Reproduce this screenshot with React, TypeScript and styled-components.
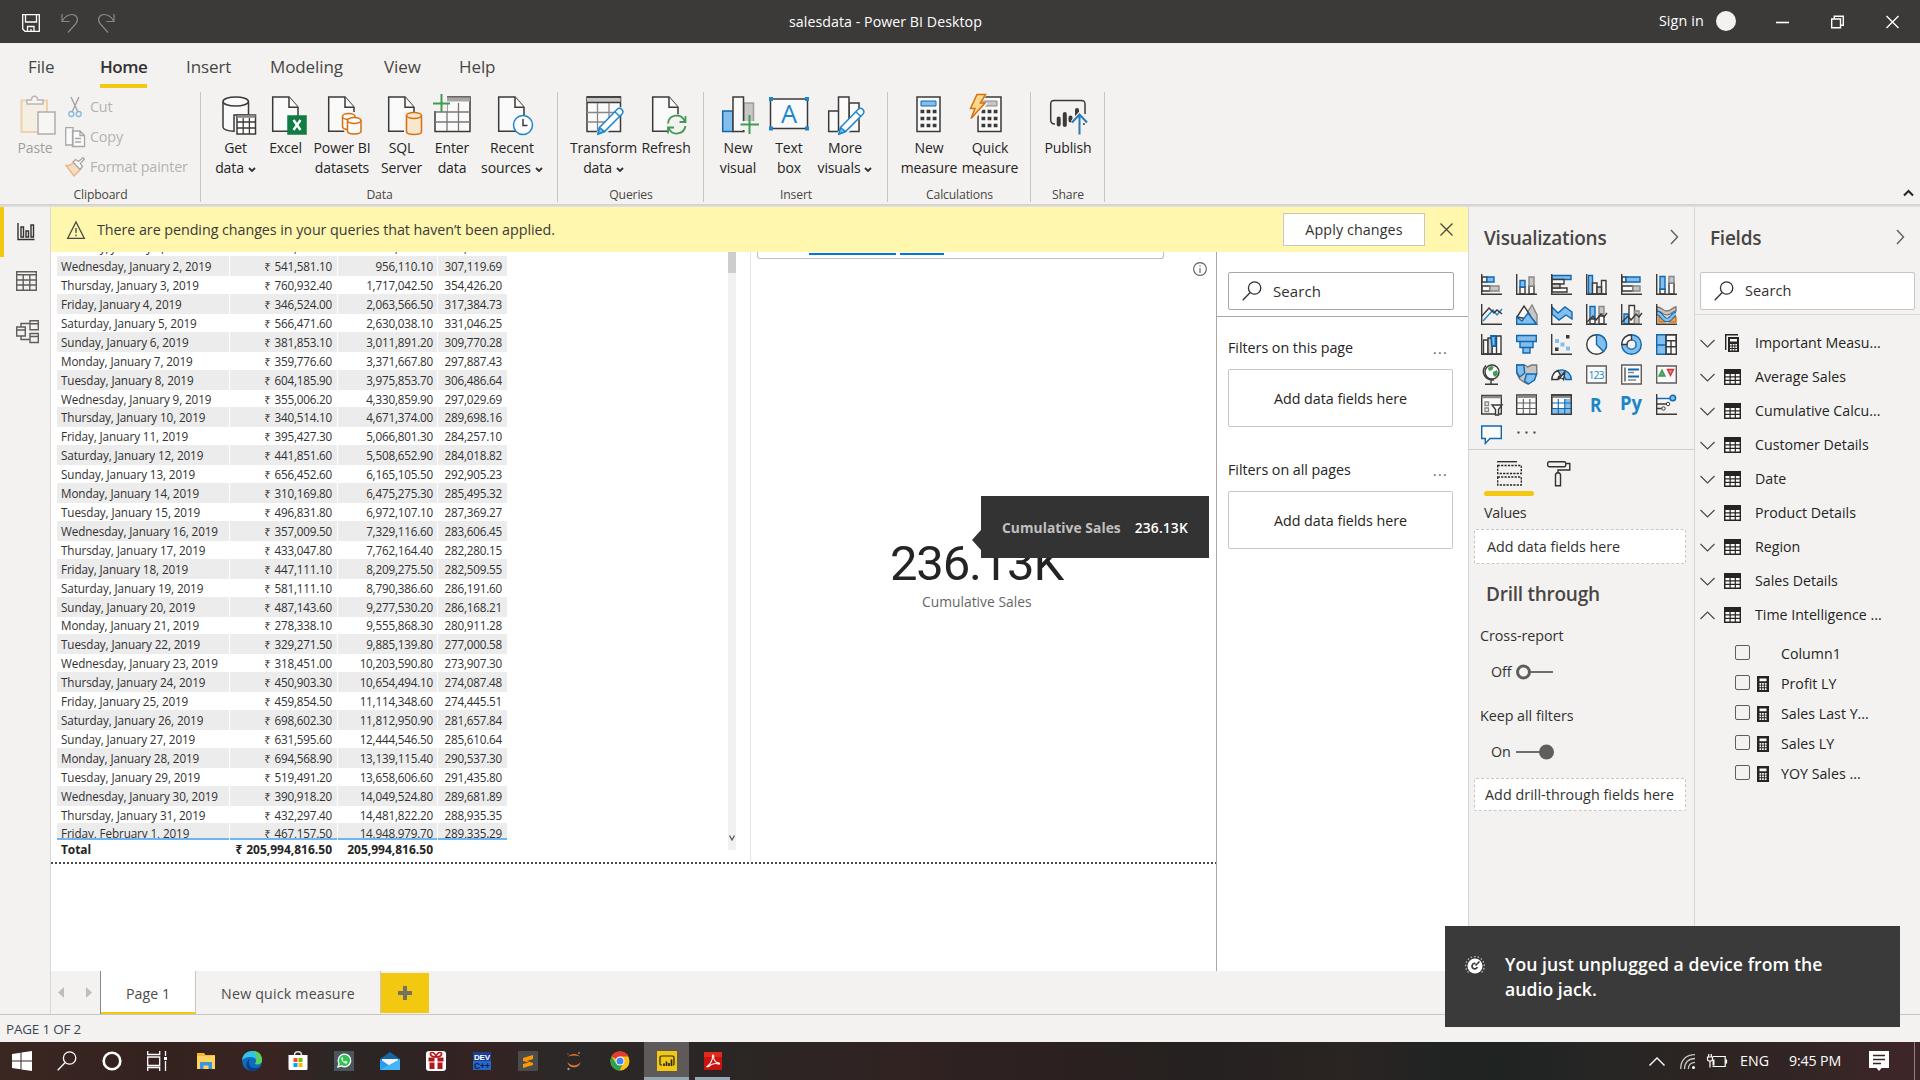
import React from "react";
import styled, { createGlobalStyle, css } from "styled-components";

const GlobalStyle = createGlobalStyle`
  * { box-sizing: border-box; }
  html, body { margin: 0; padding: 0; background: #f3f2f1; overflow: hidden; }
  body { font-family: "Open Sans", "Noto Sans", sans-serif; color: #252423; }
  svg { display: block; flex: none; overflow: visible; }
`;

const ink = "#3b3a39";
const blue = "#1068b0";
const sky = "#83beec";
const grey = "#c8c6c4";
const paper = "#fafafa";
const gold = "#f2c811";

/* ---------- shared ---------- */
const Label = styled.span<{ $size?: number; $ls?: number; $weight?: number; $color?: string }>`
  font-size: ${(p) => p.$size ?? 14.3}px;
  letter-spacing: ${(p) => p.$ls ?? -0.03}px;
  font-weight: ${(p) => p.$weight ?? 400};
  color: ${(p) => p.$color ?? "inherit"};
  white-space: pre;
  line-height: 20px;
`;

const Screen = styled.div`
  width: 1920px;
  height: 1080px;
  display: flex;
  flex-direction: column;
  background: #f3f2f1;
  position: relative;
`;

/* ---------- title bar ---------- */
const TitleBar = styled.header`
  height: 43px;
  flex: none;
  display: grid;
  grid-template-columns: 1fr auto 1fr;
  align-items: center;
  background: #3b3a38;
  color: #fff;
  padding: 0 21px 1px 22px;
`;
const QuickAccess = styled.div`
  display: flex;
  align-items: center;
  gap: 20px;
  padding-top: 4px;
`;
const TitleText = styled.div`
  transform: translateX(-75px);
`;
const WindowControls = styled.div`
  display: flex;
  justify-content: flex-end;
  align-items: center;
`;
const Avatar = styled.span`
  width: 20px;
  height: 20px;
  border-radius: 50%;
  background: #f3f2f1;
  margin: 0 40px 0 12px;
`;

/* ---------- ribbon ---------- */
const TabBar = styled.nav`
  height: 49px;
  flex: none;
  display: flex;
  padding-left: 28px;
`;
const RibbonTab = styled.div<{ $w: number; $active?: boolean }>`
  width: ${(p) => p.$w}px;
  height: 45px;
  padding-top: 13px;
  white-space: nowrap;
  color: #484644;
  span { line-height: 22px; font-size: 17px; letter-spacing: -0.1px; }
  ${(p) =>
    p.$active &&
    css`
      color: #323130;
      span {
        display: inline-block;
        height: 32px;
        font-weight: 600;
        border-bottom: 4px solid ${gold};
        letter-spacing: -0.45px;
      }
    `}
`;
const Ribbon = styled.section`
  height: 112px;
  flex: none;
  display: flex;
  align-items: flex-start;
`;
const RibbonGroup = styled.div<{ $w: number }>`
  width: ${(p) => p.$w}px;
  height: 112px;
  background: linear-gradient(#c8c6c4, #c8c6c4) right top / 1px 110px no-repeat;
  display: flex;
  flex-direction: column;
`;
const GroupBody = styled.div<{ $pad: number }>`
  height: 93px;
  flex: none;
  padding: 2px 0 0 ${(p) => p.$pad}px;
  display: flex;
`;
const GroupName = styled.div`
  text-align: center;
  font-size: 12.2px;
  line-height: 19px;
  letter-spacing: -0.15px;
  color: #484644;
`;
const Btn = styled.div<{ $w: number; $muted?: boolean }>`
  width: ${(p) => p.$w}px;
  flex: none;
  display: flex;
  flex-direction: column;
  align-items: center;
  font-size: 14px;
  letter-spacing: -0.12px;
  line-height: 20px;
  white-space: nowrap;
  color: ${(p) => (p.$muted ? "#a19f9d" : "#252423")};
`;
const BtnLine = styled.div`
  display: flex;
  align-items: center;
  gap: 4px;
  justify-content: center;
`;
const ClipActions = styled.div`
  display: flex;
  flex-direction: column;
  margin: -2px 0 0 4px;
`;
const ClipAction = styled.div`
  height: 30px;
  display: flex;
  align-items: center;
  gap: 5px;
  color: #b5b3b1;
  font-size: 14.4px;
  letter-spacing: -0.2px;
  white-space: nowrap;
  line-height: 20px;
`;
const Collapse = styled.div`
  margin: 97px 6px 0 auto;
`;
const RibbonShadow = styled.div`
  height: 3px;
  flex: none;
  background: linear-gradient(#d0cfcd, #e4e3e2);
`;

/* ---------- body ---------- */
const Body = styled.main`
  height: 808px;
  flex: none;
  display: grid;
  grid-template-columns: 51px 1417px 226px 226px;
  border-bottom: 1px solid #c8c6c4;
`;
const Rail = styled.aside`
  border-right: 1px solid #dad8d6;
  display: flex;
  flex-direction: column;
`;
const RailItem = styled.div<{ $active?: boolean }>`
  height: 50px;
  display: flex;
  align-items: center;
  padding-left: ${(p) => (p.$active ? 12 : 16)}px;
  padding-bottom: ${(p) => (p.$active ? 0 : 2)}px;
  border-left: ${(p) => (p.$active ? `4px solid ${gold}` : "0")};
`;
const Work = styled.section`
  display: flex;
  flex-direction: column;
  min-width: 0;
`;
const Banner = styled.div`
  height: 45px;
  flex: none;
  background: #fff7ad;
  display: flex;
  align-items: center;
  padding: 0 15px 0 16px;
  color: #3b3a39;
`;
const BannerText = styled(Label)`
  margin-left: 12px;
`;
const ApplyButton = styled.button`
  margin: 0 15px 0 auto;
  width: 142px;
  height: 33px;
  background: #fff;
  border: 1px solid #c8c6c4;
  padding: 0;
  color: #323130;
  font: 500 14.3px/20px "Open Sans", sans-serif;
  letter-spacing: 0.1px;
`;
const CanvasRow = styled.div`
  height: 719px;
  display: grid;
  grid-template-columns: 1165px 252px;
  background: #fff;
`;
const ReportPage = styled.div`
  height: 612px;
  display: flex;
  overflow: hidden;
  position: relative;
`;
const DottedEdge = styled.div`
  height: 2px;
  margin-top: -2px;
  position: relative;
  background: repeating-linear-gradient(90deg, #4a4a4a 0 2px, #fff 2px 4px);
`;
const TableVisual = styled.div`
  width: 699px;
  padding-left: 6px;
  display: flex;
  justify-content: space-between;
`;
const TableBody = styled.div`
  height: 586px;
  width: 450px;
  overflow: hidden;
`;
const TableRows = styled.div`
  margin-top: -14.7px;
`;
const Row = styled.div<{ $shade?: boolean; $total?: boolean }>`
  display: grid;
  grid-template-columns: 172px 107px 99px 69px;
  column-gap: 1px;
  height: ${(p) => (p.$total ? 22 : 18.92)}px;
  line-height: ${(p) => (p.$total ? 20 : 20)}px;
  font-size: 11.7px;
  letter-spacing: -0.2px;
  color: #323130;
  white-space: nowrap;
  span { padding: 0 5px; text-align: right; background: ${(p) => (p.$shade ? "#ececec" : "transparent")}; }
  span:first-child { padding-left: 4px; text-align: left; letter-spacing: -0.1px; }
  span:nth-child(2) { word-spacing: 0.8px; }
  span:nth-child(3) { padding-right: 4px; }
  ${(p) =>
    p.$total &&
    css`
      font-weight: 700;
      font-size: 12px;
      color: #252423;
      letter-spacing: 0;
      span { border-top: 2px solid #6db5f3; }
    `}
`;
const ScrollTrack = styled.div`
  width: 8px;
  height: 598px;
  margin-right: 14px;
  background: #f1f1f1;
  display: flex;
  flex-direction: column;
  justify-content: space-between;
  align-items: center;
  padding-bottom: 9px;
`;
const ScrollThumb = styled.div`
  width: 8px;
  height: 21px;
  background: #cdcdcd;
`;
const CardVisual = styled.div`
  width: 466px;
  border-left: 1px solid #e6e6e6;
  display: flex;
  flex-direction: column;
`;
const Slicer = styled.div`
  width: 407px;
  height: 7px;
  margin-left: 6px;
  border: 1px solid #c0bebc;
  border-top: 0;
  border-radius: 0 0 3px 3px;
  display: flex;
  gap: 4px;
  padding: 1px 0 0 51px;
`;
const SlicerBar = styled.div<{ $w: number }>`
  width: ${(p) => p.$w}px;
  height: 2px;
  background: #0078d4;
`;
const InfoRow = styled.div`
  display: flex;
  justify-content: flex-end;
  padding: 3px 9px 0 0;
`;
const CardValue = styled.div`
  margin: 258px 0 0 139px;
  font-family: Roboto, sans-serif;
  font-size: 49px;
  line-height: 60px;
  letter-spacing: -1.2px;
  color: #252423;
`;
const CardLabel = styled.div`
  margin: -4px 0 0 171px;
  color: #666;
`;
const Tooltip = styled.div`
  position: absolute;
  left: 930px;
  top: 244px;
  width: 228px;
  height: 62px;
  background: #333;
  display: flex;
  align-items: center;
  padding: 1px 0 0 21px;
  gap: 14px;
  &::before {
    content: "";
    position: absolute;
    left: -9px;
    top: 34px;
    border: solid transparent;
    border-width: 10px 9px 10px 0;
    border-right-color: #333;
  }
`;
const FilterPane = styled.div`
  border-left: 1px solid #a9a6a3;
  padding-top: 20px;
`;
const SearchBox = styled.div<{ $w: number; $ml: number; $line: string }>`
  width: ${(p) => p.$w}px;
  height: 38px;
  margin-left: ${(p) => p.$ml}px;
  background: #fff;
  border: 1px solid ${(p) => p.$line};
  border-radius: 2px;
  display: flex;
  align-items: center;
  gap: 11px;
  padding-left: 13px;
  color: #323130;
`;
const Rule = styled.div<{ $mt: number; $color: string }>`
  height: 1px;
  margin-top: ${(p) => p.$mt}px;
  background: ${(p) => p.$color};
`;
const FilterHead = styled.div<{ $mt: number }>`
  margin-top: ${(p) => p.$mt}px;
  height: 20px;
  padding: 0 20px 0 11px;
  display: flex;
  justify-content: space-between;
`;
const Dots = styled.span`
  font-size: 14px;
  line-height: 21px;
  letter-spacing: 1.3px;
  color: #605e5c;
`;
const FilterDrop = styled.div`
  margin: 11px 0 0 11px;
  width: 225px;
  height: 58px;
  padding-top: 1px;
  border: 1px solid #c8c6c4;
  border-radius: 2px;
  display: flex;
  align-items: center;
  justify-content: center;
`;

/* ---------- page tabs ---------- */
const PageTabs = styled.div`
  height: 43px;
  display: flex;
  background: #f3f2f1;
  color: #4d4b49;
`;
const Arrows = styled.div`
  width: 50px;
  border-right: 1px solid #8a8886;
  display: flex;
  align-items: center;
  padding-left: 7px;
  gap: 22px;
`;
const PageTab = styled.div<{ $w: number; $active?: boolean }>`
  width: ${(p) => p.$w}px;
  border-right: 1px solid #c8c6c4;
  border-bottom: 2px solid ${(p) => (p.$active ? gold : "transparent")};
  background: ${(p) => (p.$active ? "#fff" : "transparent")};
  display: flex;
  align-items: center;
  justify-content: center;
  padding-top: 4px;
`;
const AddPage = styled.div`
  width: 48px;
  height: 40px;
  margin-top: 2px;
  background: ${gold};
  display: flex;
  align-items: center;
  justify-content: center;
`;

/* ---------- right panes ---------- */
const Pane = styled.aside`
  border-left: 1px solid #d8d6d4;
  display: flex;
  flex-direction: column;
  color: #323130;
`;
const PaneHead = styled.div<{ $h: number; $pr: number }>`
  height: ${(p) => p.$h}px;
  flex: none;
  display: flex;
  justify-content: space-between;
  align-items: flex-start;
  padding: 20px ${(p) => p.$pr}px 0 15px;
  svg { margin-top: 2px; }
`;
const PaneTitle = styled.div`
  font-size: 19px;
  font-weight: 600;
  letter-spacing: -0.25px;
  line-height: 22px;
  color: #484644;
  white-space: nowrap;
`;
const VizGrid = styled.div`
  height: 182px;
  flex: none;
  display: grid;
  grid-template-columns: repeat(6, 35px);
  grid-auto-rows: 30px;
  padding-left: 12px;
`;
const WellTabs = styled.div`
  height: 46px;
  flex: none;
  display: flex;
  padding: 11px 0 0 15px;
`;
const WellTab = styled.div<{ $active?: boolean }>`
  width: 50px;
  height: 35px;
  display: flex;
  flex-direction: column;
  justify-content: space-between;
  align-items: center;
  &::after {
    content: "";
    width: 50px;
    height: 5px;
    border-radius: 3px;
    background: ${(p) => (p.$active ? gold : "transparent")};
  }
`;
const Line = styled.div<{ $mt: number; $ml: number; $h?: number }>`
  margin: ${(p) => p.$mt}px 0 0 ${(p) => p.$ml}px;
  height: ${(p) => p.$h ?? 20}px;
  flex: none;
  display: flex;
  align-items: center;
`;
const Well = styled.div<{ $h: number; $mt: number; $pl: number }>`
  width: 212px;
  height: ${(p) => p.$h}px;
  flex: none;
  margin: ${(p) => p.$mt}px 0 0 5px;
  padding-left: ${(p) => p.$pl}px;
  background: #fff;
  border: 1px dashed #c8c6c4;
  border-radius: 2px;
  display: flex;
  align-items: center;
`;
const FieldList = styled.div`
  padding-top: 11px;
`;
const ChildList = styled.div`
  padding-top: 6px;
`;
const FieldTable = styled.div`
  height: 34px;
  display: flex;
  align-items: center;
  padding-left: 5px;
  color: #252423;
`;
const FieldIcon = styled.div<{ $w: number; $ml: number; $mr: number }>`
  width: ${(p) => p.$w}px;
  margin: 0 ${(p) => p.$mr}px 0 ${(p) => p.$ml}px;
`;
const FieldRow = styled.div`
  height: 30px;
  display: flex;
  align-items: center;
  padding: 1px 0 0 40px;
  color: #252423;
`;
const Check = styled.span`
  width: 15px;
  height: 15px;
  border: 1px solid #605e5c;
  border-radius: 2px;
  margin-top: -3px;
`;

/* ---------- status, toast and taskbar ---------- */
const Status = styled.footer`
  height: 27px;
  flex: none;
  display: flex;
  align-items: center;
  padding-left: 6px;
  color: #3b4450;
`;
const Toast = styled.div`
  position: absolute;
  left: 1445px;
  top: 926px;
  width: 455px;
  height: 101px;
  background: #3a3a3a;
  color: #fff;
  display: flex;
  gap: 20px;
  padding: 26px 0 0 20px;
  svg { margin-top: 3px; }
`;
const ToastText = styled.div`
  font-size: 17.6px;
  font-weight: 600;
  line-height: 25px;
  letter-spacing: 0.05px;
  white-space: pre;
`;
const Taskbar = styled.div`
  height: 38px;
  flex: none;
  display: flex;
  color: #fff;
  background: linear-gradient(90deg, #3b2722 0, #33221f 150px, #3a2421 270px, #2c2624 330px, #2e2423 420px, #352322 480px, #2b2827 560px, #2b2625 720px, #302322 900px, #2c2020 1050px, #252120 1200px, #2a2422 1350px, #222323 1430px, #1f2322 1500px, #262625 1600px, #2d2422 1700px, #302524 1780px, #3e2628 1900px);
`;
const Task = styled.div<{ $w: number; $active?: boolean; $open?: boolean }>`
  width: ${(p) => p.$w}px;
  height: 38px;
  display: flex;
  align-items: center;
  justify-content: center;
  flex: none;
  background: ${(p) => (p.$active ? "#5d5a59" : "transparent")};
  border-bottom: ${(p) => (p.$active || p.$open ? "3px solid #93a7b5" : "0")};
  padding-top: ${(p) => (p.$active || p.$open ? 3 : 0)}px;
`;
const Tray = styled.div`
  margin-left: auto;
  display: flex;
  align-items: center;
  padding-right: 5px;
`;
const TrayItem = styled.div<{ $mr: number }>`
  margin-right: ${(p) => p.$mr}px;
  display: flex;
  align-items: center;
`;
const ShowDesktop = styled.div`
  width: 1px;
  height: 38px;
  background: #8a8382;
`;

/* ---------- ribbon icons ---------- */
const Big = ({ children }: { children: React.ReactNode }) => (
  <svg width="44" height="44" viewBox="0 0 44 44" fill="none" stroke={ink} strokeWidth="1.5">
    {children}
  </svg>
);
const Doc = () => (
  <>
    <path d="M8.7 3H25L34 13.2V37.3H8.7Z" fill={paper} />
    <path d="M25 3V13.2H34" fill={paper} />
  </>
);
const Cylinder = ({ x, y, w, h, fill = "#fafafa" }: { x: number; y: number; w: number; h: number; fill?: string }) => (
  <g stroke="#d9700f" fill={fill}>
    <path d={`M${x} ${y + 3}v${h - 6}c0 4 ${w} 4 ${w} 0v-${h - 6}`} />
    <ellipse cx={x + w / 2} cy={y + 3} rx={w / 2} ry="3" />
  </g>
);
const Pencil = () => (
  <g>
    <path d="M40.500 14.500L19 37.500L16 40L23 38Z" stroke="#f3f2f1" strokeWidth="5" />
    <path d="M17.500 33.500L35 15.500C38 12.500 43 16.500 40 20L22.500 37.500L16 40Z" fill="#fff" stroke="#1a86d0" />
    <path d="M17.500 33.500L22.500 37.500L16 40Z" fill={sky} stroke="#1a86d0" />
    <path d="M33 18l5 4.500" stroke="#1a86d0" />
  </g>
);
const bigIcons: Record<string, React.ReactNode> = {
  paste: (
    <g opacity="0.55">
      <path d="M8.500 6.500H34V38H8.500Z" fill="#f8eed9" stroke="#eab676" strokeWidth="2" />
      <path d="M14 10V6h4.500c0-5 6-5 6 0H30v4Z" fill={paper} stroke="#8a8886" />
      <path d="M25 18H42V40H25Z" fill={paper} stroke="#7a7876" />
    </g>
  ),
  get: (
    <>
      <path d="M9 7.500V33c0 2 4 4.300 11 4.300V21H34.500V7.500" fill={paper} />
      <ellipse cx="21.700" cy="7.500" rx="12.700" ry="4.600" fill={paper} />
      <path d="M23 21H41.500V40H23Z" fill="#fff" />
      <path d="M23 22.300H41.500" strokeWidth="3" stroke="#8a8886" />
      <path d="M23 28h18.500M23 34h18.500M29.200 24v16M35.400 24v16" strokeWidth="1.300" />
    </>
  ),
  excel: (
    <>
      <Doc />
      <path d="M24 22H42V40H24Z" fill="#107c41" stroke="#107c41" />
      <path d="M29.500 26l7 10M36.500 26l-7 10" stroke="#fff" strokeWidth="2.400" />
    </>
  ),
  pbi: (
    <>
      <Doc />
      <path d="M21 18H44V42H25Z" fill="#f3f2f1" stroke="none" />
      <Cylinder x={22.500} y={19.500} w={12.500} h={16} />
      <Cylinder x={27.500} y={23.500} w={13.500} h={16.500} />
    </>
  ),
  sql: (
    <>
      <Doc />
      <path d="M24 18H44V42H24Z" fill="#f3f2f1" stroke="none" />
      <Cylinder x={26.500} y={18.500} w={15} h={22} fill="#f9e6cf" />
    </>
  ),
  enter: (
    <>
      <path d="M5 3H40V37.500H5Z" fill={paper} />
      <path d="M5 5.500H40" stroke="#a8a6a4" strokeWidth="4" />
      <path d="M5 18H40M5 28H40M17 9V37M28.500 9V37" stroke="#7a7876" strokeWidth="1.300" />
      <path d="M1 0H17V17H1Z" fill="#f3f2f1" stroke="none" />
      <path d="M3 9.500H20M11.500 0V18" stroke="#3f9b55" strokeWidth="2" />
    </>
  ),
  recent: (
    <>
      <Doc />
      <circle cx="33" cy="31" r="9.500" fill="#fff" stroke="#1a86d0" />
      <path d="M33 25v6.500h4.500" />
    </>
  ),
  transform: (
    <>
      <path d="M5 3H38.500V37.500H5Z" fill={paper} />
      <path d="M5 6H38.500" stroke={grey} strokeWidth="4" />
      <path d="M5 8.500H38.500M5 3H38.500" />
      <path d="M5 18.500H38M5 28H30M15.500 9V37M27 9V30" stroke="#8a8886" strokeWidth="1.300" />
      <Pencil />
    </>
  ),
  refresh: (
    <>
      <Doc />
      <circle cx="32.500" cy="30.500" r="10.500" fill="#f3f2f1" stroke="none" />
      <path d="M24 29.500c1-9.500 13.500-10.500 16.500-2.500M41.500 22v6h-6M41.500 32c-1.500 9-13.500 10-16.500 2.500M24 39.500v-6h6" stroke="#3f9b55" strokeWidth="1.800" />
    </>
  ),
  newVisual: (
    <>
      <path d="M6.700 17H17V37.500H6.700Z" fill={sky} stroke={blue} />
      <path d="M28 9H37.500V37.500H28Z" fill={grey} stroke="#a19f9d" />
      <path d="M17 3H27.500V37.500H17Z" fill={paper} />
      <path d="M26 27H44V42H29V36H24Z" fill="#f3f2f1" stroke="none" />
      <path d="M24.500 30.500H43M33.500 21V40" stroke="#3f9b55" strokeWidth="2" />
    </>
  ),
  text: (
    <>
      <path d="M3.500 5H40.500V34.500H3.500Z" fill={paper} />
      <g fill="#1a86d0" stroke="none">
        <path d="M2 3h4v4h-4zM38 3h4v4h-4zM2 32.500h4v4h-4zM38 32.500h4v4h-4z" />
      </g>
      <text x="14" y="29" fontSize="25" fontFamily="Open Sans, sans-serif" fill="#1a86d0" stroke="none" textLength="16" lengthAdjust="spacingAndGlyphs">A</text>
    </>
  ),
  moreVisuals: (
    <>
      <path d="M5.700 17H16V37.500H5.700ZM26 9H36V37.500H26Z" fill={paper} />
      <path d="M15.500 3H26V37.500H15.500Z" fill={paper} />
      <Pencil />
    </>
  ),
  measure: (
    <>
      <path d="M10 3H33V37.500H10Z" fill={paper} />
      <path d="M14 7h15v5H14Z" fill={sky} stroke={blue} strokeWidth="1" />
      <path d="M13.500 17.500h16M13.500 24.500h16M13.500 31.500h16" strokeWidth="3.600" strokeDasharray="3.800 2.300" />
    </>
  ),
  quick: (
    <>
      <path d="M10 3H33V37.500H10Z" fill={paper} />
      <path d="M14 7h15v5H14Z" fill={grey} stroke="#8a8886" strokeWidth="1" />
      <path d="M13.500 17.500h16M13.500 24.500h16M13.500 31.500h16" strokeWidth="3.600" strokeDasharray="3.800 2.300" />
      <path d="M8 0H19L14 9h6L5 28H0V12Z" fill="#f3f2f1" stroke="none" />
      <path d="M9 .500H17.500L12.500 9H17L3 24.500L7 14.500H2.500Z" fill="#fbd98a" stroke="#d9700f" />
    </>
  ),
  publish: (
    <>
      <path d="M9 30C5 30 4.700 28 4.700 26V10c0-3 1-3.500 3.500-3.500H35c3 0 4 .5 4 3.500V20" fill="none" />
      <path d="M39 30h-2" />
      <path d="M12.700 24.500v6M18.800 20v11M24.500 23.500v3M31 16v5" strokeWidth="4" strokeLinecap="round" />
      <path d="M33.500 40.500V21M26.500 28.500L33.500 20.500L41 28.500" stroke="#f3f2f1" strokeWidth="4.500" />
      <path d="M33.500 40.500V21M26 28.500L33.500 20.500L41 28.500" stroke="#2a7ab8" strokeWidth="2" />
    </>
  ),
};

const CaretMark = styled.svg`
  margin-top: 4px;
`;
const Caret = () => (
  <CaretMark width="8" height="6" viewBox="0 0 8 6">
    <path d="M1 1l3 3 3-3" fill="none" stroke="#323130" strokeWidth="1.800" />
  </CaretMark>
);

type RibbonButton = { icon: string; w: number; l1: string; l2?: string; caret?: boolean };
const groups: { name: string; w: number; pad: number; items: RibbonButton[] }[] = [
  {
    name: "Data", w: 357, pad: 7,
    items: [
      { icon: "get", w: 55, l1: "Get", l2: "data", caret: true },
      { icon: "excel", w: 45, l1: "Excel" },
      { icon: "pbi", w: 68, l1: "Power BI", l2: "datasets" },
      { icon: "sql", w: 51, l1: "SQL", l2: "Server" },
      { icon: "enter", w: 50, l1: "Enter", l2: "data" },
      { icon: "recent", w: 70, l1: "Recent", l2: "sources", caret: true },
    ],
  },
  {
    name: "Queries", w: 146, pad: 8,
    items: [
      { icon: "transform", w: 75, l1: "Transform", l2: "data", caret: true },
      { icon: "refresh", w: 50, l1: "Refresh" },
    ],
  },
  {
    name: "Insert", w: 184, pad: 11,
    items: [
      { icon: "newVisual", w: 46, l1: "New", l2: "visual" },
      { icon: "text", w: 56, l1: "Text", l2: "box" },
      { icon: "moreVisuals", w: 56, l1: "More", l2: "visuals", caret: true },
    ],
  },
  {
    name: "Calculations", w: 143, pad: 11,
    items: [
      { icon: "measure", w: 60, l1: "New", l2: "measure" },
      { icon: "quick", w: 62, l1: "Quick", l2: "measure" },
    ],
  },
  { name: "Share", w: 74, pad: 9, items: [{ icon: "publish", w: 56, l1: "Publish" }] },
];

/* ---------- visualization gallery ---------- */
const Axis = () => <path d="M.700 0V20.300H21" />;
const vizIcons: React.ReactNode[] = [
  <><path d="M1 3h5v5H1zM1 12h8v5H1z" fill={paper} /><path d="M6 3h7v5H6z" fill={sky} stroke={blue} /><path d="M9 12h9v5H9z" fill={grey} stroke="#8a8886" /><Axis /></>,
  <><path d="M4 13h5v7H4zM13 12h5v8h-5z" fill={paper} /><path d="M4 6.500h5V13H4z" fill={sky} stroke={blue} /><path d="M13 3h5v9h-5z" fill={grey} stroke="#8a8886" /><Axis /></>,
  <><path d="M1 1.500h19v4H1z" fill={sky} stroke={blue} /><path d="M1 5.500h12v4.500H1zM1 14h15v4H1z" fill={paper} /><path d="M1 10h8v4H1z" fill={grey} /><Axis /></>,
  <><path d="M2.500 1.500h4V20h-4z" fill={sky} stroke={blue} /><path d="M6.500 9H11v11H6.500zM15.500 6.500H20V20h-4.500z" fill={paper} /><path d="M11 13h4.500v7H11z" fill={grey} /><Axis /></>,
  <><path d="M1 3h4v5H1zM1 12h11v5H1z" fill={paper} /><path d="M5 3h14v5H5z" fill={sky} stroke={blue} /><path d="M12 12h7v5h-7z" fill={grey} stroke="#8a8886" /><Axis /></>,
  <><path d="M4 15h5v5H4zM13 9h5v11h-5z" fill={paper} /><path d="M4 2.500h5V15H4z" fill={sky} stroke={blue} /><path d="M13 2.500h5V9h-5z" fill={grey} stroke="#8a8886" /><Axis /></>,

  <><path d="M2 17L12 6l4 5 5-6" stroke="#1a86d0" /><path d="M1 12L8 4l5 5 3-3 5 4" /><Axis /></>,
  <><path d="M11 9l5-8 5 10v9z" fill={grey} stroke="#8a8886" /><path d="M1 13L8 2l6 9-3 4z" fill={paper} /><path d="M.700 13L6 17l6-8 8.500 11.300H.700z" fill={sky} stroke={blue} /></>,
  <><path d="M1 3l6 6 7-6 7 5v7l-6-4-7 5-7-6z" fill={sky} stroke={blue} /><Axis /></>,
  <><path d="M4 2.500h5V15H4z" fill={sky} stroke={blue} /><path d="M13 2.500h5V10h-5z" fill={grey} stroke="#8a8886" /><path d="M4 15h5v5H4zM13 12h5v8h-5z" fill={paper} /><path d="M1 18l6-6 3 4 5-6 3 3 3-4" /><Axis /></>,
  <><path d="M3 10h5v10H3z" fill={sky} stroke={blue} /><path d="M8 1.500h5.500V20H8z" fill={paper} /><path d="M13.500 7H18v13h-4.500z" fill={grey} stroke="#8a8886" /><path d="M1 18l6-6 3 4 5-6 3 3 3-4" /><Axis /></>,
  <><path d="M3 13h6v5H3zM13 13h7v5h-7z" fill="#f5a04b" stroke="#d9700f" /><path d="M1 3c5 0 5 4 10 4s5-4 9-4v4c-4 0-4 4-9 4S6 7 1 7z" fill={grey} stroke="#7a7876" /><path d="M1 9c5 0 5 7 10 7s5-6 9-6" stroke={blue} strokeWidth="4.500" /><path d="M1 9c5 0 5 7 10 7s5-6 9-6" stroke={sky} strokeWidth="2.300" /><Axis /></>,

  <><path d="M2.500 6H7v14H2.500zM15.500 2H20v18h-4.500zM11 12h4.500v8H11z" fill={paper} /><path d="M7 4h4v16H7z" fill={grey} /><path d="M10 2h4.500v10H11z" fill={sky} stroke={blue} strokeWidth="1.800" /><Axis /></>,
  <><path d="M.700 1.500H20.300v6H.700zM4 7.500H17v6H4zM7 13.500h7v5.500H7z" fill={sky} stroke={blue} /></>,
  <><g stroke="none"><path d="M4 5h4v4H4zM9.500 8.500h4v4h-4zM15 12.500h4v4h-4z" fill={sky} /><path d="M15 1h3.500v3.500H15zM4 13.500h3.500V17H4z" fill={ink} /></g><Axis /></>,
  <><circle cx="10.500" cy="10.500" r="9.800" fill={paper} /><path d="M10.500.700V10.500L17.500 17.500A9.800 9.800 0 0 0 10.500 .700z" fill={sky} stroke={blue} /></>,
  <><circle cx="10.500" cy="10.500" r="7.200" stroke={sky} strokeWidth="5" /><circle cx="10.500" cy="10.500" r="9.800" stroke={blue} /><circle cx="10.500" cy="10.500" r="4.600" stroke={blue} /><path d="M.700 10.500A9.800 9.800 0 0 1 10.500 .700V5.900A4.600 4.600 0 0 0 5.900 10.500Z" fill={paper} stroke={ink} /></>,
  <><path d="M.700.700H20.300V20.300H.700z" fill={paper} /><path d="M.700.700H10V20.300H.700zM.700 11H10" fill={sky} stroke={blue} /><path d="M10 .700h10.300v6H10zM10 6.700h5v6h-5zM15 6.700h5.300v6H15zM10 12.700h5v7.600h-5z" /></>,

  <><circle cx="11" cy="8" r="7" fill={paper} /><path d="M7 4l3-2 3 1-2 3-3 1zM12 8l4-2 1 4-3 3-2-2z" fill="#3f9b55" stroke="none" /><path d="M5 1.500C-1 8 4 16.500 13 16M10 16v4M4 20.300h13" /></>,
  <><path d="M.700 1h8l3 2 4-2h5v9l-3 6-6 4-4-2-4-3-3-6z" fill={grey} stroke="#7a7876" /><path d="M.700 1h7l1 8-5 4-3-5zM10.500 10h10l-2 6-6 4-4-3z" fill={sky} stroke={blue} /></>,
  <><path d="M1 15.500A9.500 9.500 0 0 1 20.300 15.500H14.500A3.800 3.800 0 0 0 11 12z" fill={sky} stroke={blue} /><path d="M1 15.500A9.500 9.500 0 0 1 7 6.500l2.500 5a4 4 0 0 0-2.500 4z" fill={paper} /><path d="M7.500 15.500a3 3 0 0 1 5 0L14 7.500Z" fill={paper} /></>,
  <><path d="M.700 2H20.300V19H.700z" fill={paper} stroke="#605e5c" /><text x="2.600" y="14.500" fontSize="10.500" fontFamily="Open Sans, sans-serif" fill="#1a86d0" stroke="none" textLength="16">123</text></>,
  <><path d="M.700 1H20.300V20H.700z" fill={paper} stroke="#605e5c" /><path d="M4 3.500v14" strokeWidth="1.200" /><path d="M7 5.500h11M7 12.500h11" stroke={blue} strokeWidth="2" /><path d="M7 8.500h6M7 16h8" stroke="#8a8886" /></>,
  <><path d="M.700 2H20.300V19H.700z" fill={paper} stroke="#605e5c" /><path d="M6 6l3 6H3z" fill="#5bb16b" stroke="#3f9b55" /><path d="M14.500 11.500l3-6h-6z" fill="#f08080" stroke="#d13438" /></>,

  <><path d="M.700 1.500H20.300V20H.700z" fill={paper} /><path d="M.700 3H20.300" stroke="#8a8886" strokeWidth="2.500" /><path d="M4 8h3.500v3.500H4zM4 14h3.500v3.500H4z" stroke="#8a8886" /><path d="M11 11h10v0l-3.500 4.500V21h-3v-5.500z" fill={paper} /></>,
  <><path d="M.700 1H20.300V20.300H.700z" fill={paper} /><path d="M.700 2.700H20.300" stroke="#8a8886" strokeWidth="2.500" /><path d="M.700 9h19.600M.700 14.500h19.600M7.300 5v15M13.800 5v15" stroke="#605e5c" strokeWidth="1.100" /></>,
  <><path d="M.700 1H20.300V20.300H.700z" fill={paper} /><path d="M13.500 5h6.500v15h-6.500zM1 14.500h19v5.500H1z" fill={sky} stroke="none" /><path d="M.700 2.700H20.300" stroke="#8a8886" strokeWidth="2.500" /><path d="M.700 9h19.600M.700 14.500h19.600M7.300 5v15M13.800 5v15" stroke={blue} strokeWidth="1.100" /><path d="M.700 1H20.300V20.300H.700z" /></>,
  <text x="4" y="17.500" fontSize="20" fontWeight="700" fontFamily="Open Sans, sans-serif" fill="#1a86c8" stroke="none" textLength="11.5" lengthAdjust="spacingAndGlyphs">R</text>,
  <text x="-1" y="16" fontSize="19" fontWeight="700" fontFamily="Open Sans, sans-serif" fill="#1a86c8" stroke="none" textLength="22" lengthAdjust="spacingAndGlyphs">Py</text>,
  <><path d="M1 4.500h13" stroke={blue} /><circle cx="16.800" cy="4" r="2.800" fill={sky} stroke={blue} /><path d="M1 10h9M1 14.500h5" /><circle cx="12" cy="10" r="1.700" fill={paper} strokeWidth="1" /><circle cx="7.500" cy="14.500" r="1.700" fill={paper} strokeWidth="1" /><Axis /></>,

  <path d="M.700 2H20.300V14.500H9L4.300 19.500V14.500H.700z" fill={paper} stroke={blue} />,
  <path d="M1.500 7.500h2v2h-2zM9.500 7.500h2v2h-2zM17.500 7.500h2v2h-2z" fill={ink} stroke="none" />,
];

/* ---------- small icons ---------- */
const Chevron = ({ dir }: { dir: "up" | "down" | "right" }) =>
  dir === "right" ? (
    <svg width="9" height="16" viewBox="0 0 9 16"><path d="M1 1l6.500 7L1 15" fill="none" stroke="#605e5c" strokeWidth="1.400" /></svg>
  ) : (
    <svg width="15" height="9" viewBox="0 0 15 9">
      <path d={dir === "down" ? "M.500 1l7 7 7-7" : "M.500 8l7-7 7 7"} fill="none" stroke="#484644" strokeWidth="1.100" />
    </svg>
  );
const Magnifier = ({ color = "#323130" }: { color?: string }) => (
  <svg width="20" height="20" viewBox="0 0 20 20" fill="none" stroke={color} strokeWidth="1.300">
    <circle cx="12.600" cy="7" r="6.200" />
    <path d="M8.200 11.500L.700 19.300" />
  </svg>
);
const TableIcon = () => (
  <svg width="17" height="16" viewBox="0 0 17 16">
    <path d="M0 0h17v16H0z" fill="#252423" />
    <path d="M1.500 5h4v2.300h-4zM6.700 5h4v2.300h-4zM11.900 5h3.700v2.300h-3.700zM1.500 8.500h4v2.300h-4zM6.700 8.500h4v2.300h-4zM11.900 8.500h3.700v2.300h-3.700zM1.500 12h4v2.500h-4zM6.700 12h4v2.500h-4zM11.900 12h3.700v2.500h-3.700z" fill="#fff" />
  </svg>
);
const CalcIcon = () => (
  <svg width="12" height="16" viewBox="0 0 12 16">
    <path d="M0 0h12v16H0z" fill="#252423" />
    <path d="M2.500 2.500h7v2.700h-7zM2.500 7h1.700v1.700H2.500zM5.100 7h1.700v1.700H5.100zM7.800 7h1.700v1.700H7.800zM2.500 9.600h1.700v1.700H2.500zM5.100 9.600h1.700v1.700H5.100zM7.800 9.600h1.700v1.700H7.800zM2.500 12.200h1.700v1.700H2.500zM5.100 12.200h1.700v1.700H5.100zM7.800 12.200h1.700v1.700H7.800z" fill="#fff" />
  </svg>
);
const MeasureFolder = () => (
  <svg width="17" height="18" viewBox="0 0 17 18">
    <path d="M1.700 16V.700H14" fill="none" stroke="#252423" strokeWidth="1.400" />
    <path d="M4 3h11v15H4z" fill="#252423" />
    <path d="M6 5h7v2.500H6zM6 10h1.700v1.500H6zM8.700 10h1.700v1.500H8.700zM11.300 10h1.700v1.500h-1.700zM6 12.500h1.700V14H6zM8.700 12.500h1.700V14H8.700zM11.300 12.500h1.700V14h-1.700zM6 15h1.700v1.500H6zM8.700 15h1.700v1.500H8.700zM11.300 15h1.700v1.500h-1.700z" fill="#fff" />
  </svg>
);

/* ---------- data ---------- */
const rows: [string, string, string, string][] = [
  ["Tuesday, January 1, 2019", "₹ 414,529.00", "414,529.00", "414,529.00"],
  ["Wednesday, January 2, 2019", "₹ 541,581.10", "956,110.10", "307,119.69"],
  ["Thursday, January 3, 2019", "₹ 760,932.40", "1,717,042.50", "354,426.20"],
  ["Friday, January 4, 2019", "₹ 346,524.00", "2,063,566.50", "317,384.73"],
  ["Saturday, January 5, 2019", "₹ 566,471.60", "2,630,038.10", "331,046.25"],
  ["Sunday, January 6, 2019", "₹ 381,853.10", "3,011,891.20", "309,770.28"],
  ["Monday, January 7, 2019", "₹ 359,776.60", "3,371,667.80", "297,887.43"],
  ["Tuesday, January 8, 2019", "₹ 604,185.90", "3,975,853.70", "306,486.64"],
  ["Wednesday, January 9, 2019", "₹ 355,006.20", "4,330,859.90", "297,029.69"],
  ["Thursday, January 10, 2019", "₹ 340,514.10", "4,671,374.00", "289,698.16"],
  ["Friday, January 11, 2019", "₹ 395,427.30", "5,066,801.30", "284,257.10"],
  ["Saturday, January 12, 2019", "₹ 441,851.60", "5,508,652.90", "284,018.82"],
  ["Sunday, January 13, 2019", "₹ 656,452.60", "6,165,105.50", "292,905.23"],
  ["Monday, January 14, 2019", "₹ 310,169.80", "6,475,275.30", "285,495.32"],
  ["Tuesday, January 15, 2019", "₹ 496,831.80", "6,972,107.10", "287,369.27"],
  ["Wednesday, January 16, 2019", "₹ 357,009.50", "7,329,116.60", "283,606.45"],
  ["Thursday, January 17, 2019", "₹ 433,047.80", "7,762,164.40", "282,280.15"],
  ["Friday, January 18, 2019", "₹ 447,111.10", "8,209,275.50", "282,509.55"],
  ["Saturday, January 19, 2019", "₹ 581,111.10", "8,790,386.60", "286,191.60"],
  ["Sunday, January 20, 2019", "₹ 487,143.60", "9,277,530.20", "286,168.21"],
  ["Monday, January 21, 2019", "₹ 278,338.10", "9,555,868.30", "280,911.28"],
  ["Tuesday, January 22, 2019", "₹ 329,271.50", "9,885,139.80", "277,000.58"],
  ["Wednesday, January 23, 2019", "₹ 318,451.00", "10,203,590.80", "273,907.30"],
  ["Thursday, January 24, 2019", "₹ 450,903.30", "10,654,494.10", "274,087.48"],
  ["Friday, January 25, 2019", "₹ 459,854.50", "11,114,348.60", "274,445.51"],
  ["Saturday, January 26, 2019", "₹ 698,602.30", "11,812,950.90", "281,657.84"],
  ["Sunday, January 27, 2019", "₹ 631,595.60", "12,444,546.50", "285,610.64"],
  ["Monday, January 28, 2019", "₹ 694,568.90", "13,139,115.40", "290,537.30"],
  ["Tuesday, January 29, 2019", "₹ 519,491.20", "13,658,606.60", "291,435.80"],
  ["Wednesday, January 30, 2019", "₹ 390,918.20", "14,049,524.80", "289,681.89"],
  ["Thursday, January 31, 2019", "₹ 432,297.40", "14,481,822.20", "288,935.35"],
  ["Friday, February 1, 2019", "₹ 467,157.50", "14,948,979.70", "289,335.29"],
];
const tabs: [string, number][] = [["File", 72], ["Home", 86], ["Insert", 84], ["Modeling", 114], ["View", 75], ["Help", 60]];
const tables = ["Important Measu...", "Average Sales", "Cumulative Calcu...", "Customer Details", "Date", "Product Details", "Region", "Sales Details", "Time Intelligence ..."];
const fields = ["Column1", "Profit LY", "Sales Last Y...", "Sales LY", "YOY Sales ..."];

/* ---------- taskbar icons ---------- */
const T = ({ children, w = 20 }: { children: React.ReactNode; w?: number }) => (
  <svg width={w} height="20" viewBox={`0 0 ${w} 20`}>{children}</svg>
);
const taskIcons: { w: number; active?: boolean; open?: boolean; art: React.ReactNode }[] = [
  { w: 44, art: <T><path d="M0 3l8.500-1.300v7.800H0zM9.500 1.500L20 0v9.500H9.500zM0 10.500h8.500v7.800L0 17zM9.500 10.500H20V20L9.500 18.500z" fill="#fff" /></T> },
  { w: 46, art: <Magnifier color="#fff" /> },
  { w: 44, art: <T><circle cx="10" cy="10" r="8.300" fill="none" stroke="#fff" strokeWidth="2.600" /></T> },
  { w: 46, art: <T><path d="M.700 0v3.500h12V0M.700 6h12v8.500H.700zM.700 20v-3.500h12V20M18.500 0v5M18.500 10v10" fill="none" stroke="#fff" strokeWidth="1.300" /><path d="M17 6h3v3h-3z" fill="#fff" /></T> },
  { w: 52, art: <T><path d="M1 2h7l1.500 2H19v14H1z" fill="#f5b82e" /><path d="M1 5h18v13H1z" fill="#ffd45e" /><path d="M4 18v-7h12v7h-3.500v-3.500h-5V18z" fill="#3a96dd" /></T> },
  { w: 40, art: <T><circle cx="10" cy="10" r="10" fill="#0f6cbd" /><path d="M0 9C1 2 6 0 10 0c6 0 10 4 10 9 0 4-4 5-7 4 1-1 1-2 1-3 0-3-3-4.500-6-4C4 6.500 1 8 0 9z" fill="#35c1e8" /><path d="M11 0c6 0 9 4 9 9 0 4-4 5-7 4 2-3 3-8-2-13z" fill="#5bd15a" /><path d="M8 8c-3 4 0 10 6 9 2 0 4-1 5-2-2 4-6 5-9 5C3 19 3 10 8 8z" fill="#0a3f8a" /></T> },
  { w: 51, art: <T><path d="M.500 4h19v13.500c0 1-.5 1.500-1.500 1.500H2c-1 0-1.500-.5-1.500-1.500z" fill="#fff" /><path d="M6.500 4c0-4.500 7-4.500 7 0" fill="none" stroke="#ddd" strokeWidth="1.500" /><path d="M5.500 7h4v4h-4z" fill="#f25022" /><path d="M10.500 7h4v4h-4z" fill="#7fba00" /><path d="M5.500 12h4v4h-4z" fill="#00a4ef" /><path d="M10.500 12h4v4h-4z" fill="#ffb900" /></T> },
  { w: 41, art: <T><path d="M0 0h20v20H0z" fill="#4a555c" /><path d="M4 16l1-3.500a6.300 6.300 0 1 1 2.400 2.400z" fill="#2fc351" stroke="#fff" strokeWidth="1.300" /><path d="M7.500 6.500c-1 3 2.500 6.500 5.500 6l.5-1.800-2-1-1 1c-1-.3-1.700-1.200-2-2l.8-1-.8-1.700z" fill="#fff" /></T> },
  { w: 51, art: <T><path d="M0 8L10 1l10 7v11H0z" fill="#1565a8" /><path d="M2 8h16v8H2z" fill="#f2f6fa" /><path d="M0 8l10 7L20 8v11H0z" fill="#2a9df0" /><path d="M0 19L20 8v11z" fill="#45b5f8" /></T> },
  { w: 41, art: <T><rect width="20" height="20" rx="3" fill="#fff" /><path d="M2.500 6.500h15v4h-15zM3.500 11.500h13V18h-13z" fill="#b3181e" /><path d="M8.500 6.500h3V18h-3z" fill="#fff" /><path d="M10 6C4 6 3 1.500 6 1.500S10 6 10 6s1-4.500 4-4.500S16 6 10 6z" fill="none" stroke="#b3181e" strokeWidth="1.600" /></T> },
  { w: 51, art: <T><path d="M1 1h18v18H1z" fill="#2468c8" /><path d="M1 1h18v9H1z" fill="#1c3f94" /><text x="2" y="9" fontSize="8" fontWeight="700" fontFamily="Liberation Sans, sans-serif" fill="#fff" textLength="16">DEV</text><text x="2" y="18" fontSize="8.500" fontWeight="700" fontFamily="Liberation Sans, sans-serif" fill="#0b1c4a" textLength="16">C++</text></T> },
  { w: 41, art: <T><rect width="20" height="20" rx="1" fill="#4b4b4b" /><path d="M5 7l10-3v4l-6 2 6 2v2L5 17v-4l6-1.500L5 10z" fill="#ff9800" /></T> },
  { w: 51, art: <T><path d="M4 5.500c3-3.500 9-3.500 12 0-3.500-1.500-8.500-1.500-12 0zM3.500 11c3 4.500 10 4.500 13 0-1 7-12 7-13 0z" fill="#f37726" /><circle cx="15" cy="2" r="1" fill="#888" /><circle cx="4.500" cy="18" r="1.200" fill="#999" /><circle cx="4" cy="3" r=".7" fill="#777" /></T> },
  { w: 41, art: <T><circle cx="10" cy="10" r="9.500" fill="#fbc116" /><path d="M10 10L1.500 5.500A9.500 9.500 0 0 1 18.500 5.500H10z" fill="#e33b2e" /><path d="M1.600 5.500A9.500 9.500 0 0 0 9.500 19.500L13.500 12 10 10 5.500 11.500z" fill="#2ba24c" /><circle cx="10" cy="10" r="4.500" fill="#fff" /><circle cx="10" cy="10" r="3.500" fill="#4285f4" /></T> },
  { w: 4, art: null },
  { w: 45, active: true, art: <T><path d="M0 0h20v20H0z" fill={gold} /><path d="M5 14H4c-1 0-1-.5-1-1V6.500c0-1 .5-1.500 1.500-1.500h11c1 0 1.500.500 1.500 1.500V13c0 1-.5 1-1 1" fill="none" stroke="#252423" strokeWidth="1.200" /><path d="M7 15v-2.500M9.500 15V10.500M12 15v-3M14.500 15V8.500" stroke="#252423" strokeWidth="1.700" /></T> },
  { w: 6, art: null },
  { w: 35, open: true, art: <T><path d="M1 1h18v18H1z" fill="#c8140c" /><path d="M1 1h18v5H1z" fill="#e02a1e" /><path d="M4 15.500c3-1.500 6-7 5.500-10.500 0-1.500 1.500-1.500 1.200.5C10.300 9 13 12 16 12c1 .3.500 1.500-.5 1-3-1-6-1-10 2.500-1 .6-2 .5-1.500 0z" fill="none" stroke="#fff" strokeWidth="1.100" /></T> },
];

export default function App() {
  return (
    <>
      <GlobalStyle />
      <Screen>
        <TitleBar>
          <QuickAccess>
            <svg width="18" height="18" viewBox="0 0 18 18" fill="none" stroke="#fff" strokeWidth="1.300">
              <path d="M.700.700H17.300V17.300H3L.700 15zM3.500.700V8h11V.700M5.500 17V12.500h6.500V17M9 15v2" />
            </svg>
            <svg width="18" height="19" viewBox="-1 0 18 19" fill="none" stroke="#8b8987" strokeWidth="1.200">
              <path d="M1 0V7.500H8.500M1 7.500C4 2 8 .500 11 .500c5 0 7 5 4 9L7 18.500" />
            </svg>
            <svg width="18" height="19" viewBox="1 0 18 19" fill="none" stroke="#8b8987" strokeWidth="1.200">
              <path d="M17 0V7.500H9.500M17 7.500C14 2 10 .500 7 .500c-5 0-7 5-4 9L11 18.500" />
            </svg>
          </QuickAccess>
          <TitleText><Label $size={14.2} $ls={0.05}>salesdata - Power BI Desktop</Label></TitleText>
          <WindowControls>
            <Label $size={14.3} $ls={0.15}>Sign in</Label>
            <Avatar />
            <svg width="101" height="13" viewBox="0 0 123 13" preserveAspectRatio="xMaxYMid slice" fill="none" stroke="#fff" strokeWidth="1.400" overflow="visible" style={{ width: 123 }}>
              <path d="M0 7.500h13" strokeWidth="1.600" />
              <path d="M55.700 4h8.800v8.800h-8.800zM58.300 3.500V1.200h9v9H65" />
              <path d="M110.500 1l12 12M122.500 1l-12 12" />
            </svg>
          </WindowControls>
        </TitleBar>

        <TabBar>
          {tabs.map(([name, w]) => (
            <RibbonTab key={name} $w={w} $active={name === "Home"}><span>{name}</span></RibbonTab>
          ))}
        </TabBar>

        <Ribbon>
          <RibbonGroup $w={201}>
            <GroupBody $pad={9}>
              <Btn $w={52} $muted><Big>{bigIcons.paste}</Big>Paste</Btn>
              <ClipActions>
                <ClipAction>
                  <svg width="20" height="20" viewBox="0 0 20 20" fill="none" stroke="#a19f9d" strokeWidth="1.300">
                    <path d="M6 0l6.500 14M14 0L7.500 14" />
                    <circle cx="6.300" cy="17" r="2.500" stroke="#7fb9de" /><circle cx="13.700" cy="17" r="2.500" stroke="#7fb9de" />
                  </svg>
                  Cut
                </ClipAction>
                <ClipAction>
                  <svg width="20" height="20" viewBox="0 0 20 20" fill={paper} stroke="#a8a6a4" strokeWidth="1.300">
                    <path d="M.700.700H8V18H.700zM7.500 4H15l4.500 4.500V19.500h-12zM15 4v4.500h4.500M10 11.500h6M10 15h6" />
                  </svg>
                  Copy
                </ClipAction>
                <ClipAction>
                  <svg width="20" height="20" viewBox="0 0 20 20" fill={paper} stroke="#a8a6a4" strokeWidth="1.300">
                    <path d="M1 8.500C5 9 7 7 9 5.500L15.500 12C14 14 12 16 9 19Z" fill="#f7dcc0" stroke="#e5b58a" />
                    <path d="M8 5l2.500-2.500 3 2L18 .700l1.300 1.500-4 4.300 2.200 3L15 12.500z" />
                  </svg>
                  Format painter
                </ClipAction>
              </ClipActions>
            </GroupBody>
            <GroupName>Clipboard</GroupName>
          </RibbonGroup>
          {groups.map((g) => (
            <RibbonGroup key={g.name} $w={g.w}>
              <GroupBody $pad={g.pad}>
                {g.items.map((b) => (
                  <Btn key={b.icon} $w={b.w}>
                    <Big>{bigIcons[b.icon]}</Big>
                    <BtnLine>{b.l1}</BtnLine>
                    {b.l2 && <BtnLine>{b.l2}{b.caret && <Caret />}</BtnLine>}
                  </Btn>
                ))}
              </GroupBody>
              <GroupName>{g.name}</GroupName>
            </RibbonGroup>
          ))}
          <Collapse>
            <svg width="11" height="8" viewBox="0 0 11 8"><path d="M1 6.500l4.500-4.500L10 6.500" fill="none" stroke="#252423" strokeWidth="2" /></svg>
          </Collapse>
        </Ribbon>
        <RibbonShadow />

        <Body>
          <Rail>
            <RailItem $active>
              <svg width="20" height="18" viewBox="0 0 20 18" fill="none" stroke="#323130" strokeWidth="1.400">
                <path d="M2 0V16.500H18.500M5 4h2.500v10H5zM10 8h2.500v6H10zM15 2h2.500v12H15z" />
              </svg>
            </RailItem>
            <RailItem>
              <svg width="21" height="20" viewBox="0 0 21 20" fill="none" stroke="#605e5c" strokeWidth="1.400">
                <path d="M.700.700H20.300V19.300H.700zM.700 3.700H20.300M.700 9h19.600M.700 14h19.600M7.200 4v15M13.800 4v15" />
              </svg>
            </RailItem>
            <RailItem>
              <svg width="23" height="23" viewBox="0 0 23 23" fill="none" stroke="#605e5c" strokeWidth="1.400">
                <path d="M.700 7h8.600v9H.700zM.700 10h8.600M14 .700h8.300v9H14zM14 3.700h8.300M14 13.500h8.300v9H14zM14 16.500h8.300M5 7V3.500h9M5 16v3.500h9" />
              </svg>
            </RailItem>
          </Rail>

          <Work>
            <Banner>
              <svg width="18" height="18" viewBox="0 0 18 18" fill="none" stroke="#484644" strokeWidth="1.300">
                <path d="M9 1L17.300 17.300H.700zM9 7v5M9 13.500v1.700" />
              </svg>
              <BannerText $size={14.3} $ls={-0.05}>There are pending changes in your queries that haven’t been applied.</BannerText>
              <ApplyButton>Apply changes</ApplyButton>
              <svg width="13" height="13" viewBox="0 0 13 13"><path d="M.500.500l12 12M12.500.500l-12 12" stroke="#484644" strokeWidth="1.300" /></svg>
            </Banner>

            <CanvasRow>
              <div>
                <ReportPage>
                  <TableVisual>
                    <div>
                      <TableBody>
                        <TableRows>
                          {rows.map((r, i) => (
                            <Row key={r[0]} $shade={i % 2 === 1}>{r.map((c, j) => <span key={j}>{c}</span>)}</Row>
                          ))}
                        </TableRows>
                      </TableBody>
                      <Row $total><span>Total</span><span>₹ 205,994,816.50</span><span>205,994,816.50</span><span /></Row>
                    </div>
                    <ScrollTrack>
                      <ScrollThumb />
                      <svg width="6" height="6" viewBox="0 0 6 6"><path d="M.500.500L3 5 5.500.500" fill="none" stroke="#505050" strokeWidth="1.200" /></svg>
                    </ScrollTrack>
                  </TableVisual>
                  <CardVisual>
                    <Slicer><SlicerBar $w={87} /><SlicerBar $w={44} /></Slicer>
                    <InfoRow>
                      <svg width="14" height="14" viewBox="0 0 14 14" fill="none" stroke="#605e5c" strokeWidth="1.100"><circle cx="7" cy="7" r="6.400" /><path d="M7 6v5M7 3.500v1.300" /></svg>
                    </InfoRow>
                    <CardValue>236.13K</CardValue>
                    <CardLabel><Label $size={13.8} $ls={0.02}>Cumulative Sales</Label></CardLabel>
                  </CardVisual>
                  <Tooltip>
                    <Label $size={13.8} $ls={0.05} $weight={700} $color="#c0c0c0">Cumulative Sales</Label>
                    <Label $size={13.8} $ls={0.15} $weight={600} $color="#fff">236.13K</Label>
                  </Tooltip>
                </ReportPage>
                <DottedEdge />
              </div>
              <FilterPane>
                <SearchBox $w={226} $ml={11} $line="#a9a6a3"><Magnifier /><Label $size={15} $ls={0.1}>Search</Label></SearchBox>
                <Rule $mt={6} $color="#a9a6a3" />
                <FilterHead $mt={21}><Label>Filters on this page</Label><Dots>...</Dots></FilterHead>
                <FilterDrop><Label>Add data fields here</Label></FilterDrop>
                <FilterHead $mt={33}><Label>Filters on all pages</Label><Dots>...</Dots></FilterHead>
                <FilterDrop><Label>Add data fields here</Label></FilterDrop>
              </FilterPane>
            </CanvasRow>

            <PageTabs>
              <Arrows>
                <svg width="6" height="11" viewBox="0 0 6 11"><path d="M6 0v11L0 5.500z" fill="#c0bebc" /></svg>
                <svg width="6" height="11" viewBox="0 0 6 11"><path d="M0 0v11l6-5.500z" fill="#c0bebc" /></svg>
              </Arrows>
              <PageTab $w={95} $active><Label $size={14.2} $ls={0.05} $weight={500}>Page 1</Label></PageTab>
              <PageTab $w={185}><Label $size={14.2} $ls={0.2} $weight={500}>New quick measure</Label></PageTab>
              <AddPage>
                <svg width="14" height="14" viewBox="0 0 14 14"><path d="M7 0v14M0 7h14" stroke="#76705e" strokeWidth="4" /></svg>
              </AddPage>
            </PageTabs>
          </Work>

          <Pane>
            <PaneHead $h={67} $pr={15}><PaneTitle>Visualizations</PaneTitle><Chevron dir="right" /></PaneHead>
            <VizGrid>
              {vizIcons.map((art, i) => (
                <svg key={i} width="21" height="21" viewBox="0 0 21 21" fill="none" stroke={ink} strokeWidth="1.400">{art}</svg>
              ))}
            </VizGrid>
            <Rule $mt={-7} $color="#d0cecc" />
            <WellTabs>
              <WellTab $active>
                <svg width="25" height="25" viewBox="0 0 25 25" fill="none" stroke="#252423" strokeWidth="1.300">
                  <path d="M0 .700h20" />
                  <path d="M.700 4.500h23.600v8H.700zM.700 16h23.600v8H.700z" strokeDasharray="2.200 1.200" />
                </svg>
              </WellTab>
              <WellTab>
                <svg width="24" height="26" viewBox="0 0 24 26" fill="none" stroke="#323130" strokeWidth="1.400">
                  <rect x=".700" y=".700" width="18" height="5" rx="1.500" />
                  <path d="M19 2.500h3.800v6.500H11v3.500M8.500 13.500l1-1.500h3l1 1.500v11.300h-5z" />
                </svg>
              </WellTab>
            </WellTabs>
            <Line $mt={7} $ml={15}><Label $ls={-0.2}>Values</Label></Line>
            <Well $h={35} $mt={6} $pl={12}><Label>Add data fields here</Label></Well>
            <Line $mt={19} $ml={17} $h={22}><PaneTitle>Drill through</PaneTitle></Line>
            <Line $mt={21} $ml={11}><Label>Cross-report</Label></Line>
            <Line $mt={16} $ml={22}>
              <Label $ls={-0.1}>Off</Label>
              <svg width="43" height="16" viewBox="-5 0 43 16" fill="none" stroke="#605e5c">
                <circle cx="7.500" cy="8" r="6" strokeWidth="3" /><path d="M14 8h23" strokeWidth="1.800" />
              </svg>
            </Line>
            <Line $mt={24} $ml={11}><Label>Keep all filters</Label></Line>
            <Line $mt={16} $ml={22}>
              <Label $ls={-0.1}>On</Label>
              <svg width="43" height="16" viewBox="-5 0 43 16">
                <circle cx="30.500" cy="8" r="7.500" fill="#605e5c" /><path d="M0 8h24" stroke="#605e5c" strokeWidth="1.800" />
              </svg>
            </Line>
            <Well $h={33} $mt={16} $pl={10}><Label $ls={0.05}>Add drill-through fields here</Label></Well>
          </Pane>

          <Pane>
            <PaneHead $h={65} $pr={15}><PaneTitle>Fields</PaneTitle><Chevron dir="right" /></PaneHead>
            <SearchBox $w={215} $ml={5} $line="#c8c6c4"><Magnifier /><Label $size={14.5} $ls={0.1}>Search</Label></SearchBox>
            <Rule $mt={4} $color="#dad8d6" />
            <FieldList>
              {tables.map((t, i) => (
                <FieldTable key={t}>
                  <Chevron dir={i === 8 ? "up" : "down"} />
                  <FieldIcon $w={17} $ml={9} $mr={14}>{i === 0 ? <MeasureFolder /> : <TableIcon />}</FieldIcon>
                  <Label $size={14.2} $ls={0}>{t}</Label>
                </FieldTable>
              ))}
            </FieldList>
            <ChildList>
              {fields.map((f, i) => (
                <FieldRow key={f}>
                  <Check />
                  <FieldIcon $w={12} $ml={7} $mr={12}>{i > 0 && <CalcIcon />}</FieldIcon>
                  <Label $size={14.2} $ls={0.02}>{f}</Label>
                </FieldRow>
              ))}
            </ChildList>
          </Pane>
        </Body>

        <Status><Label $size={13.4} $ls={-0.15}>PAGE 1 OF 2</Label></Status>

        <Taskbar>
          {taskIcons.map((t, i) => (
            <Task key={i} $w={t.w} $active={t.active} $open={t.open}>{t.art}</Task>
          ))}
          <Tray>
            <TrayItem $mr={15}><svg width="16" height="9" viewBox="0 0 16 9"><path d="M.500 8.500L8 1l7.500 7.500" fill="none" stroke="#fff" strokeWidth="1.400" /></svg></TrayItem>
            <TrayItem $mr={12}>
              <svg width="15" height="15" viewBox="0 0 15 15" fill="none" stroke="#c9c4c3" strokeWidth="1.300">
                <path d="M.700 15C.700 6 6 .700 15 .700M4.500 15C4.500 8.500 8.500 4.500 15 4.500M8.300 15c0-4 2.700-6.700 6.700-6.700" /><circle cx="13.500" cy="13.500" r="1.500" fill="#fff" stroke="none" />
              </svg>
            </TrayItem>
            <TrayItem $mr={13}>
              <svg width="20" height="14" viewBox="0 0 20 14" fill="none" stroke="#fff" strokeWidth="1.200">
                <path d="M6 2.500h12.200v10H5.500M19.500 5.500v4M.500 3h5v2.500c0 2-5 2-5 0zM1.700 3V0M4.300 3V0M3 7v6.500" /><path d="M5.500 5.500h2v6h-2z" fill="#fff" stroke="none" />
              </svg>
            </TrayItem>
            <TrayItem $mr={20}><Label $size={14.2} $ls={0}>ENG</Label></TrayItem>
            <TrayItem $mr={28}><Label $size={14.2} $ls={-0.15}>9:45 PM</Label></TrayItem>
            <TrayItem $mr={25}>
              <svg width="20" height="20" viewBox="0 0 20 20"><path d="M0 0h20v17h-7.500L10 20l-2.500-3H0z" fill="#fff" /><path d="M4 4.500h12M4 8.500h12M4 12.500h8" stroke="#352625" strokeWidth="1.300" /></svg>
            </TrayItem>
            <ShowDesktop />
          </Tray>
        </Taskbar>

        <Toast>
          <svg width="20" height="20" viewBox="0 0 20 20">
            <circle cx="10" cy="11" r="7.500" fill="#fff" />
            <path d="M3.500 17.500A9.300 9.300 0 1 1 16.500 17.500" fill="none" stroke="#bbb" strokeWidth="1.300" strokeDasharray="1.500 2" />
            <path d="M12.300 12A2.700 2.700 0 1 1 10.500 8.500M10.500 10.500l4-4" fill="none" stroke="#3a3a3a" strokeWidth="1.600" />
          </svg>
          <ToastText>{"You just unplugged a device from the\naudio jack."}</ToastText>
        </Toast>
      </Screen>
    </>
  );
}
